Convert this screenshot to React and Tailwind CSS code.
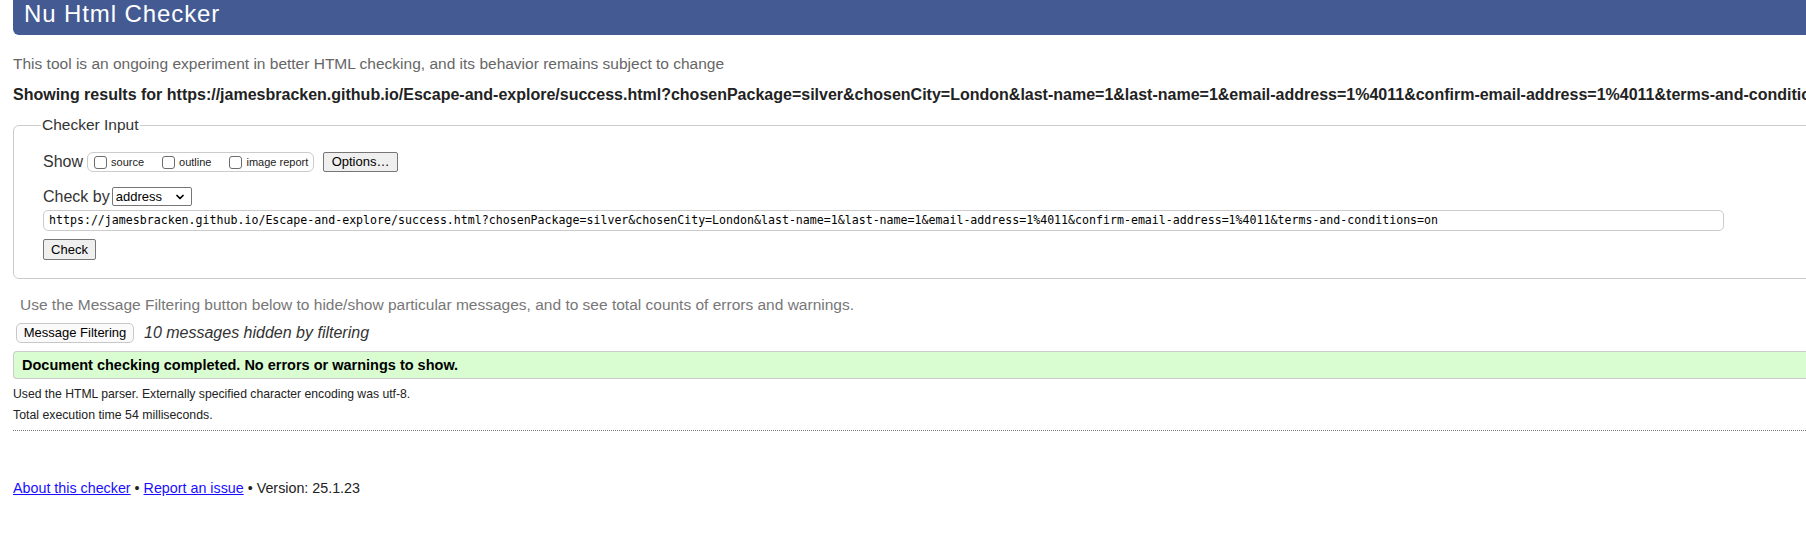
import { ChevronDown } from 'lucide-react'

const url =
  'https://jamesbracken.github.io/Escape-and-explore/success.html?chosenPackage=silver&chosenCity=London&last-name=1&last-name=1&email-address=1%4011&confirm-email-address=1%4011&terms-and-conditions=on'

function Box({ label }) {
  return (
    <span className="flex items-center">
      <span className="w-[13px] h-[13px] border border-[#6d6d6d] rounded-[3px] bg-white mr-[4px]" />
      <span className="text-[11px] leading-[13px] text-[#222]">{label}</span>
    </span>
  )
}

export default function App() {
  return (
    <div className="w-[1806px] h-[549px] overflow-hidden bg-white font-['Liberation_Sans',Arial,sans-serif] text-[#222]">
      <div className="w-[2400px] pl-[13px]">
        <h1 className="h-[35px] bg-[#445a92] rounded-bl-[6px] text-white text-[24px] leading-[27px] tracking-[0.9px] pl-[11px] font-normal">
          Nu Html Checker
        </h1>

        <p className="mt-[19px] text-[15.5px] leading-[20px] text-[#666]">
          This tool is an ongoing experiment in better HTML checking, and its behavior remains subject to change
        </p>
        <p className="mt-[11px] text-[16px] leading-[20px] font-bold text-[#222] whitespace-nowrap">
          Showing results for {url}
        </p>

        <fieldset className="mt-[10px] border border-[#ccc] rounded-[6px] pl-[29px] pr-4 pb-[18px] pt-0">
          <legend className="-ml-[2px] px-[1px] text-[15.5px] leading-[20px] text-[#333]">Checker Input</legend>

          <div className="mt-[17px] h-[20px] flex items-center">
            <span className="text-[16px] leading-[20px] text-[#333] mr-[4px]">Show</span>
            <div className="h-[20px] w-[227px] border border-[#ccc] rounded-[6px] flex items-center pl-[6px] gap-[18px]">
              <Box label="source" />
              <Box label="outline" />
              <Box label="image report" />
            </div>
            <button className="ml-[9px] h-[20px] w-[75px] border border-[#767676] rounded-[2px] bg-[#efefef] text-[13px] leading-[18px] text-black">
              Options…
            </button>
          </div>

          <div className="mt-[15px] h-[19px] flex items-center">
            <span className="text-[16px] leading-[20px] text-[#333] mr-[2px]">Check by</span>
            <div className="h-[19px] w-[80px] border border-[#767676] rounded-[2px] flex items-center justify-between pl-[3px] pr-[5px] bg-white">
              <span className="text-[13px] leading-[17px] text-black">address</span>
              <ChevronDown size={12} strokeWidth={3.5} className="text-black" />
            </div>
          </div>

          <div className="mt-[4px] h-[21px] w-[1681px] border border-[#ccc] rounded-[5px] flex items-center pl-[5px] bg-white">
            <span className="font-['DejaVu_Sans_Mono',monospace] text-[11.6px] leading-[19px] text-black whitespace-nowrap">
              {url}
            </span>
          </div>

          <button className="mt-[8px] block h-[21px] w-[53px] border border-[#767676] rounded-[2px] bg-[#efefef] text-[13px] leading-[19px] text-black">
            Check
          </button>
        </fieldset>

        <p className="mt-[16px] pl-[7px] text-[15.5px] leading-[20px] text-[#777]">
          Use the Message Filtering button below to hide/show particular messages, and to see total counts of errors and warnings.
        </p>

        <div className="mt-[8px] pl-[3px] h-[20px] flex items-center">
          <button className="h-[20px] w-[118px] border border-[#c8c8c8] rounded-[5px] bg-[#fafafa] text-[13px] leading-[18px] text-black">
            Message Filtering
          </button>
          <span className="ml-[10px] italic text-[16px] leading-[20px] text-[#333]">10 messages hidden by filtering</span>
        </div>

        <div className="mt-[8px] h-[28px] bg-[#d9fdd0] border border-[#ccc] border-r-0 rounded-l-[4px] flex items-center pl-[8px]">
          <span className="font-bold text-[14.5px] leading-[18px] text-black">
            Document checking completed. No errors or warnings to show.
          </span>
        </div>

        <p className="mt-[7px] text-[12.2px] leading-[16px] text-[#222]">
          Used the HTML parser. Externally specified character encoding was utf-8.
        </p>
        <p className="mt-[5px] text-[12.3px] leading-[16px] text-[#222]">Total execution time 54 milliseconds.</p>

        <hr className="mt-[7px] border-0 border-t border-dotted border-[#777]" />

        <p className="mt-[48px] text-[14.3px] leading-[18px] text-[#222]">
          <a href="#" className="text-[#1a0dff] underline">About this checker</a>
          {' • '}
          <a href="#" className="text-[#1a0dff] underline">Report an issue</a>
          {' • Version: 25.1.23'}
        </p>
      </div>
    </div>
  )
}
